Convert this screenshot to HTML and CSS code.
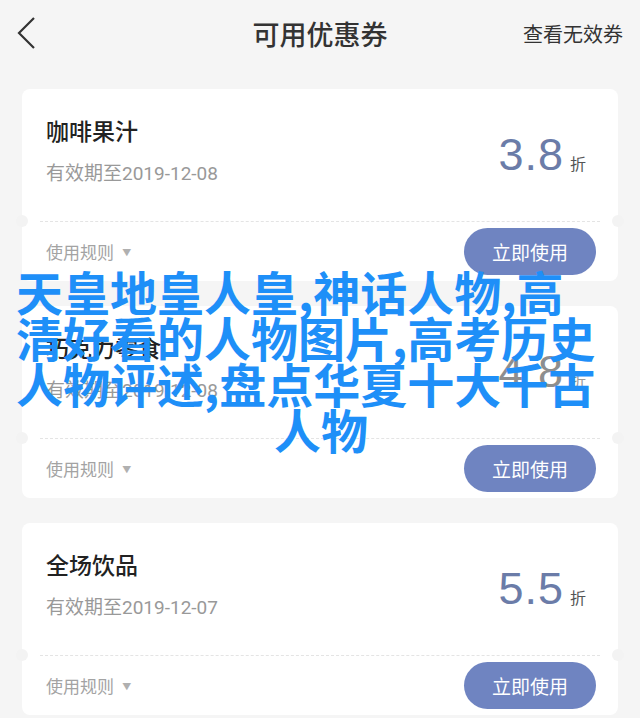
FILE: index.html
```html
<!DOCTYPE html>
<html lang="zh-CN">
<head>
    <meta charset="UTF-8">
    <meta name="viewport" content="width=device-width, initial-scale=1.0">
    <title>可用优惠券</title>
    <link rel="stylesheet" href="styles.css">
</head>
<body>

    <div class="page">
        <div class="header">
            <span class="back">
                <svg width="20" height="32" viewBox="0 0 20 32">
                    <polyline points="17,1 2,16 17,31" fill="none" stroke="#333" stroke-width="2.2" />
                </svg>
            </span>
            <h1>可用优惠券</h1>
            <span class="invalid-link">查看无效券</span>
        </div>

        <div class="coupon-list">
            <div class="coupon">
                <div class="coupon-top">
                    <div class="coupon-info">
                        <div class="coupon-name">咖啡果汁</div>
                        <div class="coupon-date">有效期至2019-12-08</div>
                    </div>
                    <div class="coupon-value"><span class="num">3.8</span><span class="unit">折</span></div>
                </div>
                <div class="coupon-bottom">
                    <span class="rules">使用规则 <i class="arrow">▼</i></span>
                    <button class="use-btn">立即使用</button>
                </div>
            </div>

            <div class="coupon">
                <div class="coupon-top">
                    <div class="coupon-info">
                        <div class="coupon-name">巧克力零食</div>
                        <div class="coupon-date">有效期至2019-12-08</div>
                    </div>
                    <div class="coupon-value faded"><span class="num">4.8</span><span class="unit">折</span></div>
                </div>
                <div class="coupon-bottom">
                    <span class="rules">使用规则 <i class="arrow">▼</i></span>
                    <button class="use-btn">立即使用</button>
                </div>
            </div>

            <div class="coupon">
                <div class="coupon-top">
                    <div class="coupon-info">
                        <div class="coupon-name">全场饮品</div>
                        <div class="coupon-date">有效期至2019-12-07</div>
                    </div>
                    <div class="coupon-value"><span class="num">5.5</span><span class="unit">折</span></div>
                </div>
                <div class="coupon-bottom">
                    <span class="rules">使用规则 <i class="arrow">▼</i></span>
                    <button class="use-btn">立即使用</button>
                </div>
            </div>
        </div>

        <!-- caption laid over the screenshot -->
        <p class="caption">天皇地皇人皇,神话人物,高清好看的人物图片,高考历史人物评述,盘点华夏十大千古<span class="caption-end">人物</span></p>
    </div>

</body>
</html>
```

FILE: styles.css
```css
body {
    font-family: Roboto, "Noto Sans CJK SC", sans-serif;
    margin: 0;
    padding: 0;
    background-color: #f5f5f5;
    color: #333;
}

.page {
    position: relative;
    width: 640px;
    height: 718px;
    overflow: hidden;
}

.header {
    display: grid;
    grid-template-columns: 1fr auto 1fr;
    align-items: center;
    height: 66px;
    padding: 0 17px 0 17px;
}

.back svg {
    display: block;
}

h1 {
    margin: 0;
    font-size: 27px;
    font-weight: 500;
    color: #333;
}

.invalid-link {
    justify-self: end;
    font-size: 20px;
    color: #333;
}

.coupon-list {
    display: flex;
    flex-direction: column;
    gap: 25px;
    padding: 23px 22px 0 22px;
}

.coupon {
    position: relative;
    height: 192px;
    background: #fff;
    border-radius: 8px;
}

    /* little notches on both sides of the dashed line */
    .coupon::before,
    .coupon::after {
        content: "";
        position: absolute;
        top: 126px;
        width: 12px;
        height: 12px;
        border-radius: 50%;
        background: #f3f3f3;
    }

    .coupon::before {
        left: -6px;
    }

    .coupon::after {
        right: -6px;
    }

.coupon-top {
    display: flex;
    justify-content: space-between;
    align-items: center;
    height: 133px;
    margin: 0 18px;
    padding: 0 6px;
    border-bottom: 1px dashed #e4e4e4;
    box-sizing: border-box;
}

.coupon-info {
    padding-bottom: 4px;
}

.coupon-name {
    font-size: 23px;
    font-weight: 500;
    line-height: 28px;
    color: #222;
}

.coupon-date {
    margin-top: 14px;
    font-size: 19px;
    line-height: 26px;
    color: #999;
}

.coupon-value {
    display: flex;
    align-items: baseline;
    color: #6b7ca8;
    padding-right: 8px;
}

    .coupon-value .num {
        font-family: "Liberation Sans", sans-serif;
        font-size: 45px;
        letter-spacing: 1px;
    }

    .coupon-value .unit {
        margin-left: 6px;
        font-size: 16px;
        color: #555;
    }

    .coupon-value.faded {
        color: #8e8e8e;
    }

        .coupon-value.faded .unit {
            color: #999;
        }

.coupon-bottom {
    display: flex;
    justify-content: space-between;
    align-items: center;
    height: 59px;
    padding: 0 22px 0 24px;
}

.rules {
    font-size: 17px;
    color: #a3a3a3;
}

.arrow {
    font-style: normal;
    font-size: 9px;
    margin-left: 4px;
    vertical-align: 3px;
    color: #b0b0b0;
}

.use-btn {
    width: 132px;
    height: 47px;
    border: none;
    border-radius: 24px;
    background-color: #6f84c1;
    color: #fff;
    font-family: inherit;
    font-size: 19px;
    cursor: pointer;
}

.caption {
    position: absolute;
    top: 268px;
    left: 16px;
    width: 588px;
    margin: 0;
    font-family: "Noto Sans CJK SC", sans-serif;
    font-size: 47px;
    font-weight: bold;
    line-height: 46px;
    color: #1e8ff8;
}

.caption-end {
    display: block;
    padding-left: 22px;
    text-align: center;
}
```
